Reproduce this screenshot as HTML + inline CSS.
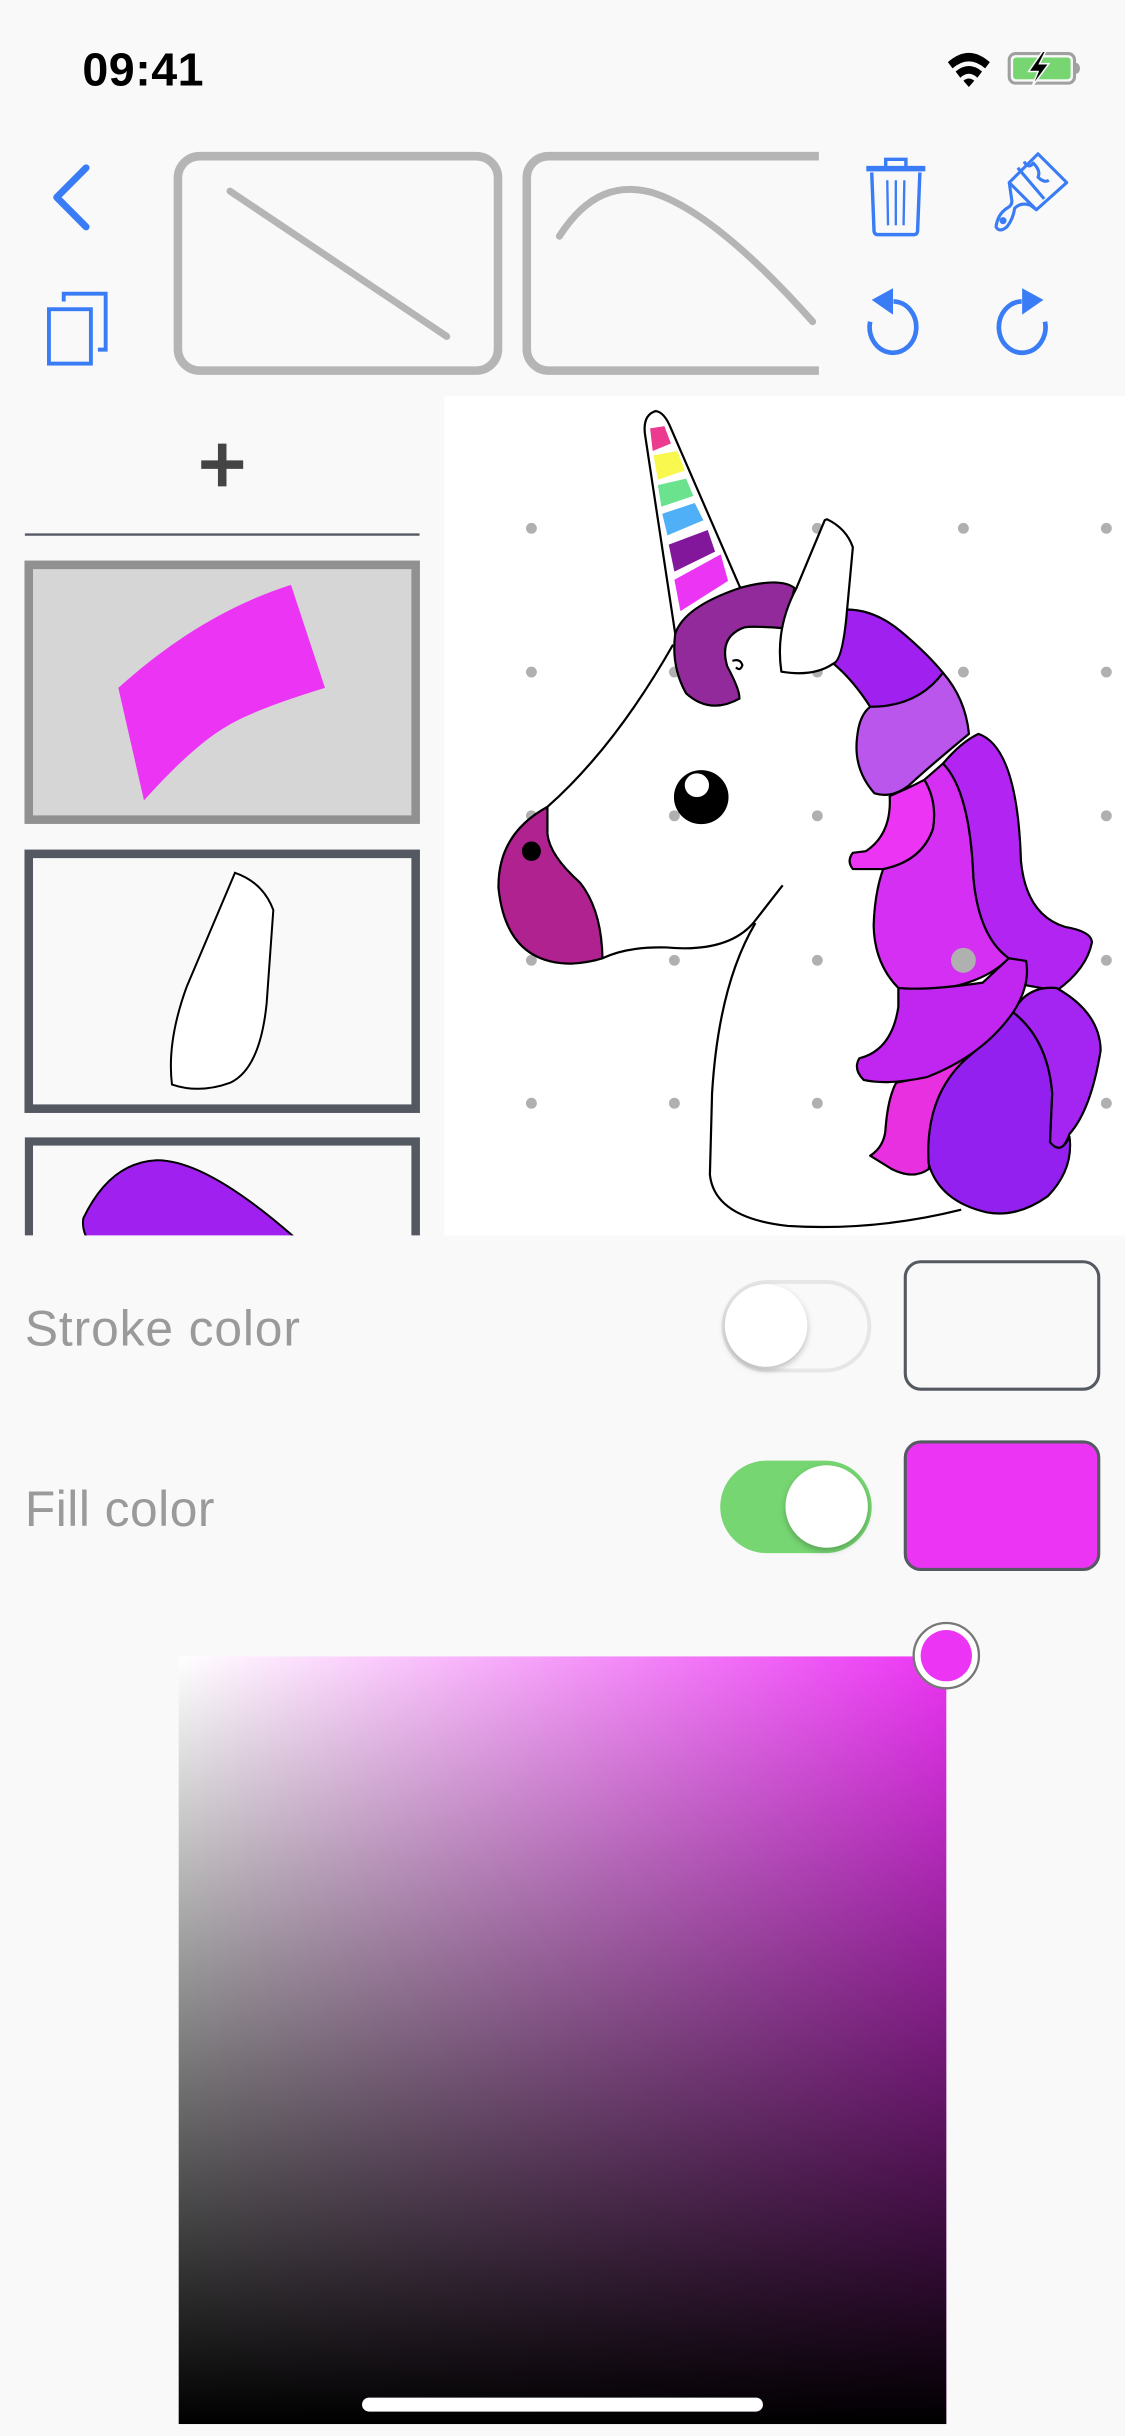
<!DOCTYPE html>
<html><head><meta charset="utf-8"><style>
html,body{margin:0;padding:0;background:#f9f9f9;width:1125px;height:2436px;overflow:hidden}
svg{display:block}
</style></head><body>
<svg width="1125" height="2436" viewBox="0 0 724 1567.7" xmlns="http://www.w3.org/2000/svg">
<defs>
<linearGradient id="gh" x1="0" y1="0" x2="1" y2="0"><stop offset="0" stop-color="#ffffff"/><stop offset="1" stop-color="#ec34f4"/></linearGradient>
<linearGradient id="gv" x1="0" y1="0" x2="0" y2="1"><stop offset="0" stop-color="#000" stop-opacity="0"/><stop offset="1" stop-color="#000"/></linearGradient>
<filter id="sh" x="-50%" y="-50%" width="200%" height="200%"><feDropShadow dx="0" dy="2" stdDeviation="2" flood-color="#000" flood-opacity="0.25"/></filter>
<clipPath id="c3"><rect x="16" y="732" width="255" height="63"/></clipPath>
<clipPath id="t2"><rect x="330" y="90" width="197" height="160"/></clipPath>
</defs>
<rect width="724" height="1568" fill="#f9f9f9"/>

<text x="53" y="55" font-family="Liberation Sans, sans-serif" font-size="30" font-weight="bold" fill="#000" textLength="78">09:41</text>
<g fill="#000">
<path d="M610,40 Q623.5,28 637,40 L634,44 Q623.5,35 613,44 Z"/>
<path d="M615,46 Q623.5,39 632,46 L629,50 Q623.5,45 618,50 Z"/>
<path d="M620,52 Q623.5,49 627,52 L623.5,56 Z"/>
</g>
<rect x="649.5" y="34.5" width="42" height="19" rx="4" fill="none" stroke="#a0a0a0" stroke-width="2"/>
<rect x="652" y="37" width="37" height="14" rx="2" fill="#77d672"/>
<path d="M692.5,40.5 a2.5,3.5 0 0 1 0,7 Z" fill="#a0a0a0"/>
<path d="M671,33 L662,46 L668,46 L664,56 L675,41 L669,41 L673,33 Z" fill="#000" stroke="#f9f9f9" stroke-width="1"/>

<polyline points="55.4,108 36.5,127 55.4,146" fill="none" stroke="#3a7cf5" stroke-width="4.5" stroke-linecap="round" stroke-linejoin="round"/>
<path d="M41,194 L41,189 L68,189 L68,225 L63,225" fill="none" stroke="#3a7cf5" stroke-width="2.5"/>
<rect x="31.5" y="199" width="27" height="35" fill="none" stroke="#3a7cf5" stroke-width="2.5"/>

<rect x="114.5" y="100.5" width="206" height="138" rx="14" fill="none" stroke="#b5b5b5" stroke-width="5.5"/>
<line x1="148" y1="123" x2="287.5" y2="216.5" stroke="#b5b5b5" stroke-width="4.5" stroke-linecap="round"/>
<g clip-path="url(#t2)">
<rect x="339" y="100.5" width="260" height="138" rx="14" fill="none" stroke="#b5b5b5" stroke-width="5.5"/>
<path d="M360,152 C378,124 398,118 420,124 C452,134 490,170 523,207" fill="none" stroke="#b5b5b5" stroke-width="4.5" stroke-linecap="round"/>
</g>

<g fill="none" stroke="#3a7cf5" stroke-width="2.2">
<path d="M570,107 L570,102.5 L583,102.5 L583,107"/>
<line x1="557.5" y1="108.5" x2="595.5" y2="108.5" stroke-width="3.5"/>
<path d="M561,111 L562.5,149 Q563,151 565,151 L588,151 Q590,151 590.5,149 L592,111"/>
<line x1="571" y1="116" x2="571.5" y2="145" stroke-width="1.5"/>
<line x1="576.5" y1="116" x2="576.5" y2="145" stroke-width="1.5"/>
<line x1="582" y1="116" x2="581.5" y2="145" stroke-width="1.5"/>
</g>
<g fill="none" stroke="#3a7cf5" stroke-width="2" stroke-linejoin="round">
<path d="M668,99 L686.5,117.5 L667,135 L649.5,117.5 Z"/>
<path d="M655,108 L672,128"/>
<path d="M659,104 Q662,109 665,105 Q670,110 668,114 Q672,118 675,116"/>
<path d="M649.5,117.5 L651,128 Q652,132 648,134 Q642,138 641,146 Q643,150 648,146 Q652,141 653,134 Q657,130 663,132 L667,135"/>
<circle cx="645.5" cy="142" r="1.3" fill="#3a7cf5"/>
</g>
<g fill="none" stroke="#3a7cf5" stroke-width="3">
<path d="M560,207 A15,16.5 0 1 0 575,194"/>
<path d="M657.5,194 A15,16.5 0 1 0 672.5,207"/>
</g>
<path d="M561,193 L574.7,185.5 L574.7,202.5 Z" fill="#3a7cf5"/>
<path d="M671.5,193 L657.8,185.5 L657.8,202.5 Z" fill="#3a7cf5"/>

<g stroke="#444" stroke-width="5.5"><line x1="129.5" y1="299" x2="156.5" y2="299"/><line x1="143" y1="285.5" x2="143" y2="313"/></g>
<line x1="16" y1="344" x2="270" y2="344" stroke="#555a62" stroke-width="1.5"/>

<rect x="18.5" y="363.5" width="249" height="164" fill="#d6d6d6" stroke="#919191" stroke-width="5.5"/>
<g transform="translate(0,257.4) scale(0.2145,0.353)">
<path d="M355,525 Q600,390 873,337 L975,525 Q760,565 680,595 Q580,630 432,730 Z" fill="#ec34f4"/>
</g>
<rect x="18.5" y="549.5" width="249" height="164" fill="#f9f9f9" stroke="#545860" stroke-width="5.5"/>
<g transform="translate(0,257.4) scale(0.2145,0.353)">
<path d="M705,862 Q790,880 820,930 L800,1100 Q780,1220 690,1245 Q600,1265 516,1248 Q500,1170 560,1070 Z" fill="#fff" stroke="#000" stroke-width="2" vector-effect="non-scaling-stroke"/>
</g>
<g clip-path="url(#c3)">
<rect x="18.5" y="734.5" width="249" height="164" fill="#f9f9f9" stroke="#545860" stroke-width="5.5"/>
<g transform="translate(0,257.4) scale(0.2145,0.353)">
<path d="M250,1492 Q330,1390 470,1386 Q620,1385 890,1530 L262,1530 Q245,1510 250,1492 Z" fill="#a020f0" stroke="#000" stroke-width="2" vector-effect="non-scaling-stroke"/>
</g>
</g>

<rect x="286" y="255" width="438" height="540" fill="#fff"/>
<g fill="#b0b0b0">
<g id="row"><circle cx="342" cy="340" r="3.5"/><circle cx="434" cy="340" r="3.5"/><circle cx="526" cy="340" r="3.5"/><circle cx="620" cy="340" r="3.5"/><circle cx="712" cy="340" r="3.5"/></g>
<use href="#row" y="92.5"/><use href="#row" y="185"/><use href="#row" y="278"/><use href="#row" y="370"/>
</g>

<g transform="translate(284,251.3) scale(0.2788,0.348)" stroke="#000" stroke-width="2.2" stroke-linejoin="round">
<path vector-effect="non-scaling-stroke" d="M905,505 Q925,460 935,405 Q1000,405 1060,445 Q1120,485 1158,522 Q1100,585 990,585 Q950,535 905,505 Z" fill="#a020f0"/>
<path vector-effect="non-scaling-stroke" d="M990,585 Q1100,585 1158,522 Q1210,570 1218,635 Q1120,700 1080,730 Q1040,755 1000,745 Q950,700 960,640 Q965,600 990,585 Z" fill="#bb56ec"/>
<path vector-effect="non-scaling-stroke" d="M1158,690 Q1200,650 1240,635 Q1330,660 1338,870 Q1350,970 1440,992 Q1500,1000 1502,1020 Q1490,1070 1420,1110 L1350,1100 Q1335,1055 1310,1050 Q1240,1010 1228,900 Q1220,740 1158,690 Z" fill="#b224f2"/>
<path vector-effect="non-scaling-stroke" d="M1115,720 L1158,690 Q1220,740 1228,900 Q1240,1010 1310,1050 Q1250,1100 1120,1110 L1055,1105 Q1000,1060 998,990 Q1000,930 1020,885 Q1110,870 1135,810 Q1145,760 1115,720 Z" fill="#d42ff2"/>
<path vector-effect="non-scaling-stroke" d="M1035,750 Q1080,735 1115,720 Q1145,760 1135,810 Q1110,870 1020,885 L950,885 Q935,870 950,855 L980,852 Q1040,820 1035,750 Z" fill="#ec34f4"/>
<path vector-effect="non-scaling-stroke" d="M1050,1280 Q1130,1270 1220,1230 Q1140,1300 1125,1440 Q1090,1460 1040,1440 L990,1415 Q1020,1400 1025,1370 Q1030,1310 1050,1280 Z" fill="#e930e0"/>
<path vector-effect="non-scaling-stroke" d="M1320,1150 Q1350,1100 1420,1105 Q1520,1150 1522,1220 Q1500,1330 1450,1375 Q1430,1420 1405,1390 L1410,1300 Q1400,1200 1320,1150 Z" fill="#a424f2"/>
<path vector-effect="non-scaling-stroke" d="M1320,1150 Q1400,1200 1410,1300 L1405,1390 Q1430,1415 1450,1380 Q1460,1440 1400,1490 Q1330,1530 1260,1520 Q1150,1500 1125,1430 Q1115,1300 1220,1230 Q1280,1190 1320,1150 Z" fill="#9420f0"/>
<path vector-effect="non-scaling-stroke" d="M1055,1105 Q1120,1110 1250,1095 L1310,1050 L1350,1055 Q1360,1100 1320,1150 Q1250,1230 1120,1270 Q1030,1285 975,1275 Q950,1255 965,1235 Q1040,1220 1055,1140 Z" fill="#c026f0"/>
<path vector-effect="non-scaling-stroke" d="M535,470 Q400,660 245,770" fill="none"/>
<path vector-effect="non-scaling-stroke" d="M372,1050 Q430,1028 520,1030 Q660,1040 720,985 L788,915" fill="none"/>
<path vector-effect="non-scaling-stroke" d="M725,985 Q640,1100 625,1300 L620,1450 Q630,1530 800,1545 Q1000,1555 1200,1515" fill="none"/>
<path vector-effect="non-scaling-stroke" d="M245,770 Q130,820 132,920 Q150,1060 300,1060 Q340,1058 372,1050 Q370,960 320,910 Q250,860 245,820 Z" fill="#b0228f"/>
<path vector-effect="non-scaling-stroke" d="M540,450 L470,80 Q465,45 495,38 Q515,40 530,70 L690,365" fill="#fff"/>
<g stroke="none">
<path d="M482,70 L515,66 L530,98 L488,112 Z" fill="#ec3a8f"/>
<path d="M490,120 L545,112 L562,148 L500,165 Z" fill="#f8f84e"/>
<path d="M500,175 L565,163 L582,195 L508,215 Z" fill="#6ae28e"/>
<path d="M510,228 L585,208 L605,240 L522,268 Z" fill="#4fb0f8"/>
<path d="M525,285 L615,258 L632,298 L538,335 Z" fill="#82179c"/>
<path d="M538,350 L645,303 L662,352 L552,408 Z" fill="#ec34f4"/>
</g>
<path vector-effect="non-scaling-stroke" d="M540,450 Q560,400 690,365 Q780,345 815,365 L795,440 Q720,435 700,438 Q640,455 660,510 Q690,555 688,570 Q620,600 565,560 Q530,510 540,450 Z" fill="#922a9c"/>
<path vector-effect="non-scaling-stroke" d="M672,500 Q690,495 695,508 Q690,520 680,512" fill="none"/>
<path vector-effect="non-scaling-stroke" d="M785,520 Q770,440 820,365 L885,240 L890,238 Q935,255 950,290 L935,420 Q925,500 905,505 Q860,530 785,520 Z" fill="#fff"/>
<ellipse cx="600" cy="752" rx="63" ry="50" fill="#000" stroke="none"/>
<ellipse cx="590" cy="730" rx="28" ry="22" fill="#fff" stroke="none"/>
<ellipse cx="208" cy="852" rx="22" ry="18" fill="#000" stroke="none"/>
</g>
<circle cx="620" cy="618" r="8" fill="#b0b0b0"/>

<text x="16" y="866" font-family="Liberation Sans, sans-serif" font-size="32" fill="#9a9a9a" textLength="177">Stroke color</text>
<rect x="465.5" y="825" width="94" height="57" rx="28.5" fill="#f9f9f9" stroke="#e6e6e6" stroke-width="2.5"/>
<circle cx="493" cy="853" r="26.5" fill="#fff" filter="url(#sh)"/>
<rect x="582.6" y="812" width="124.5" height="82" rx="10" fill="#f9f9f9" stroke="#555a62" stroke-width="2"/>

<text x="16" y="982" font-family="Liberation Sans, sans-serif" font-size="32" fill="#9a9a9a" textLength="122">Fill color</text>
<rect x="463.5" y="940" width="97.5" height="59.5" rx="29.75" fill="#76d672"/>
<circle cx="532" cy="969.5" r="26.5" fill="#fff" filter="url(#sh)"/>
<rect x="582.6" y="928" width="124.5" height="82" rx="10" fill="#ec34f4" stroke="#555a62" stroke-width="2"/>

<rect x="115" y="1066" width="494" height="494" fill="url(#gh)"/>
<rect x="115" y="1066" width="494" height="494" fill="url(#gv)"/>
<circle cx="609" cy="1065.5" r="21" fill="#fff" stroke="#777" stroke-width="1.5"/>
<circle cx="609" cy="1065.5" r="16.5" fill="#ec34f4"/>

<rect x="233" y="1543" width="258" height="9" rx="4.5" fill="#ffffff"/>
</svg>
</body></html>
